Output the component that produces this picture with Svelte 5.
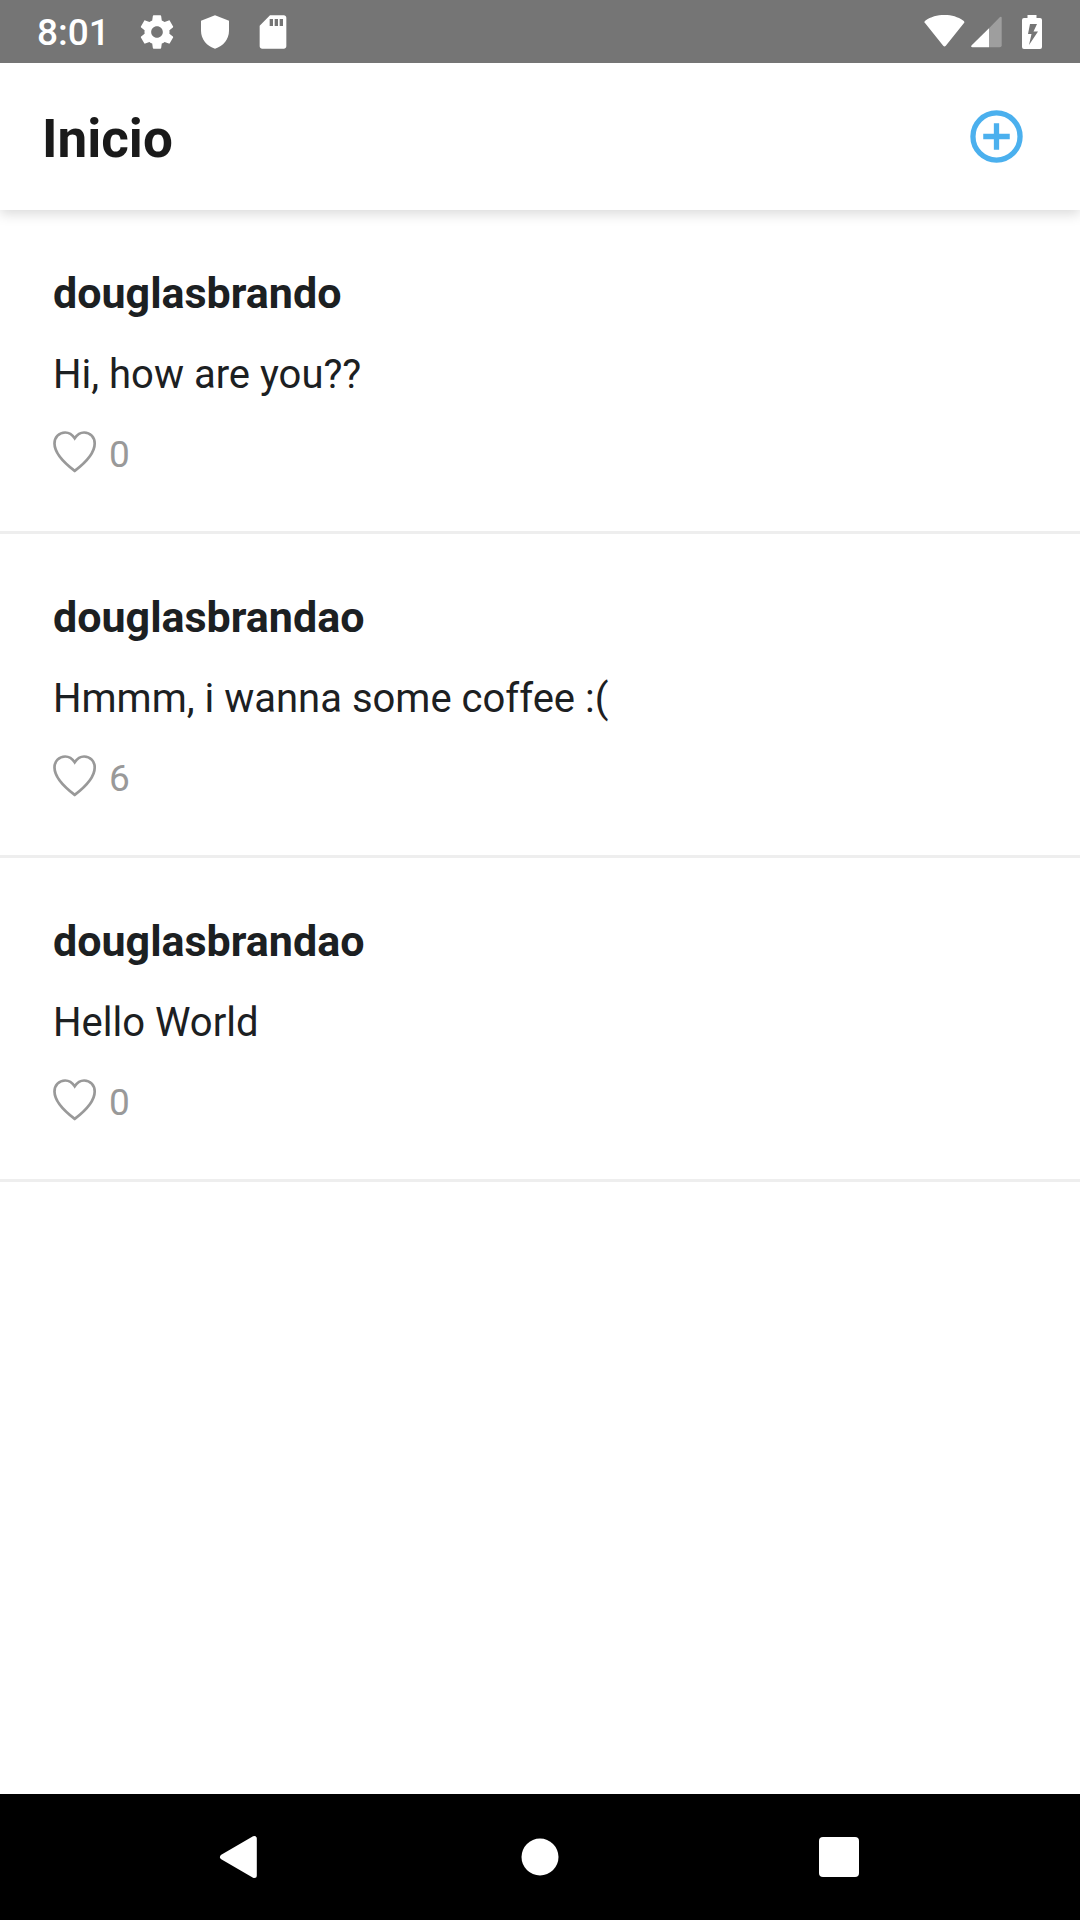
<script>
  let posts = $state([
    { id: 1, author: 'douglasbrando', text: 'Hi, how are you??', likes: 0 },
    { id: 2, author: 'douglasbrandao', text: 'Hmmm, i wanna some coffee :(', likes: 6 },
    { id: 3, author: 'douglasbrandao', text: 'Hello World', likes: 0 }
  ]);
</script>

<div class="screen">
  <div class="status">
    <div class="group notices">
      <time>8:01</time>
      <svg class="icon" viewBox="0 0 24 24" aria-hidden="true">
        <path fill="#fff" d="M19.43 12.98c.04-.32.07-.64.07-.98s-.03-.66-.07-.98l2.11-1.65c.19-.15.24-.42.12-.64l-2-3.46c-.12-.22-.39-.3-.61-.22l-2.49 1c-.52-.4-1.08-.73-1.69-.98l-.38-2.65C14.46 2.18 14.25 2 14 2h-4c-.25 0-.46.18-.49.42l-.38 2.65c-.61.25-1.17.59-1.69.98l-2.49-1c-.23-.09-.49 0-.61.22l-2 3.46c-.13.22-.07.49.12.64l2.11 1.65c-.04.32-.07.65-.07.98s.03.66.07.98l-2.11 1.65c-.19.15-.24.42-.12.64l2 3.46c.12.22.39.3.61.22l2.49-1c.52.4 1.08.73 1.69.98l.38 2.65c.03.24.24.42.49.42h4c.25 0 .46-.18.49-.42l.38-2.65c.61-.25 1.17-.59 1.69-.98l2.49 1c.23.09.49 0 .61-.22l2-3.46c.12-.22.07-.49-.12-.64l-2.11-1.65zM12 15.5c-1.93 0-3.5-1.57-3.5-3.5s1.57-3.5 3.5-3.5 3.5 1.57 3.5 3.5-1.57 3.5-3.5 3.5z" />
      </svg>
      <svg class="icon" viewBox="0 0 24 24" aria-hidden="true">
        <path fill="#fff" d="M12 2 3.6 5.2v6.1c0 5 3.5 9.4 8.4 10.7 4.9-1.3 8.4-5.7 8.4-10.7V5.2z" />
      </svg>
      <svg class="icon" viewBox="0 0 24 24" aria-hidden="true">
        <path fill="#fff" fill-rule="evenodd" d="M18.5 2h-8.300L4 8.200V20.500c0 .8.700 1.500 1.500 1.500h13c.8 0 1.500-.7 1.500-1.500v-17c0-.8-.7-1.500-1.500-1.500zM10 4.200h2v4.200h-2zm3 0h2v4.200h-2zm3 0h2v4.200h-2z" />
      </svg>
    </div>
    <div class="group signals">
      <svg class="wifi" viewBox="0 0 42 36" aria-hidden="true">
        <path fill="#fff" d="M1.200 9.300Q-.4 8 1.200 6.700C7 2.700 13 1 20.500 1s13 1.700 19 5.700q1.600 1.300.3 2.600L21.800 31.800q-1.300 1.500-2.600 0z" />
      </svg>
      <svg class="cell" viewBox="0 0 34 36" aria-hidden="true">
        <path fill="#fff" opacity=".3" d="M19 14.300 30 3Q31.700 2 31.700 4v27.200q0 2-2 2H19z" />
        <path fill="#fff" d="M19 14.300V33.200H2.500q-2.300-.5-.8-2z" />
      </svg>
      <svg class="battery" viewBox="0 0 20 36" aria-hidden="true">
        <path fill="#fff" fill-rule="evenodd" d="M5.500 1h9v3H18q2 0 2 2v27q0 2-2 2H2q-2 0-2-2V6q0-2 2-2h3.500zM8 10 6 20h3.500L7 31l9-13.500h-4.500L15 10z" />
      </svg>
    </div>
  </div>

  <header>
    <h1>Inicio</h1>
    <button class="add" aria-label="Nuevo">
      <svg viewBox="0 0 54 54" aria-hidden="true">
        <circle cx="27" cy="27" r="24" fill="none" stroke="#4bb0ee" stroke-width="5.4" />
        <path d="M13.500 27h27M27 13.500v27" stroke="#4bb0ee" stroke-width="5.4" />
      </svg>
    </button>
  </header>

  <main>
    {#each posts as post (post.id)}
      <article>
        <h2>{post.author}</h2>
        <p>{post.text}</p>
        <button class="like" aria-label="Me gusta: {post.likes}" onclick={() => (post.likes += 1)}>
          <svg viewBox="0 0 44 48" aria-hidden="true">
            <path fill="none" stroke="#999" stroke-width="2.7" d="M21.700 7.300C19.500 4 16 1.500 12.200 1.500 6 1.500 1.500 6.200 1.500 12.500c0 9.500 8.500 18.500 20.200 27.400C33.400 31 41.700 22 41.700 12.500c0-6.300-4.400-11-10.600-11-3.800 0-7.200 2.500-9.400 5.800z" />
          </svg>
          <span>{post.likes}</span>
        </button>
      </article>
    {/each}
  </main>

  <nav aria-label="Sistema">
    <button aria-label="Atrás">
      <svg viewBox="0 0 44 44" aria-hidden="true">
        <path fill="#fff" stroke="#fff" stroke-width="5" stroke-linejoin="round" d="M35.300 3.500v37L3.500 22z" />
      </svg>
    </button>
    <button aria-label="Inicio">
      <svg viewBox="0 0 44 44" aria-hidden="true"><circle cx="22" cy="22" r="18.5" fill="#fff" /></svg>
    </button>
    <button aria-label="Recientes">
      <svg viewBox="0 0 44 44" aria-hidden="true"><rect x="2" y="2" width="40" height="40" rx="4" fill="#fff" /></svg>
    </button>
  </nav>
</div>

<style>
  :global(body) {
    margin: 0;
    background: #fff;
  }

  .screen {
    display: flex;
    flex-direction: column;
    min-height: 100vh;
    font-family: Roboto, 'Liberation Sans', sans-serif;
  }

  button {
    padding: 0;
    border: 0;
    background: none;
    font: inherit;
    cursor: pointer;
  }

  svg {
    display: block;
  }

  .status {
    display: flex;
    align-items: center;
    justify-content: space-between;
    height: 63px;
    padding: 0 38px 0 37px;
    background: #757575;
    color: #fff;
    z-index: 2;
  }

  .group {
    display: flex;
    align-items: center;
  }

  .notices {
    gap: 18px;
  }

  time {
    margin-right: 9px;
    padding-top: 2px;
    font-size: 37px;
    font-weight: 500;
    line-height: 48px;
  }

  .icon {
    width: 40px;
    height: 40px;
  }

  .wifi {
    width: 42px;
    height: 36px;
    margin-right: 4px;
  }

  .cell {
    width: 34px;
    height: 36px;
    margin-right: 18px;
  }

  .battery {
    width: 20px;
    height: 36px;
  }

  header {
    display: flex;
    align-items: center;
    justify-content: space-between;
    height: 147px;
    padding: 0 57px 0 42px;
    background: #fff;
    box-shadow: 0 4px 12px rgba(0, 0, 0, 0.15);
    z-index: 1;
  }

  .status,
  header {
    position: relative;
  }

  h1 {
    margin: 0;
    padding-top: 4px;
    font-size: 53px;
    font-weight: 700;
    line-height: 64px;
    color: #1a1a1a;
  }

  .add svg {
    width: 53px;
    height: 53px;
  }

  main {
    flex: 1;
  }

  article {
    padding: 59px 53px 52px;
    border-bottom: 3px solid #eee;
    color: #1c2022;
  }

  h2 {
    margin: 0;
    font-size: 43px;
    font-weight: 700;
    line-height: 48px;
  }

  p {
    margin: 34px 0 32px;
    font-size: 40px;
    line-height: 48px;
  }

  .like {
    display: flex;
    align-items: center;
    gap: 12px;
    font-size: 37px;
    line-height: 48px;
    color: #999;
  }

  .like svg {
    width: 44px;
    height: 48px;
  }

  nav {
    display: grid;
    grid-template-columns: repeat(3, 1fr);
    height: 126px;
    padding: 0 92px;
    background: #000;
  }

  nav button {
    display: flex;
    align-items: center;
    justify-content: center;
  }

  nav svg {
    width: 44px;
    height: 44px;
  }
</style>
